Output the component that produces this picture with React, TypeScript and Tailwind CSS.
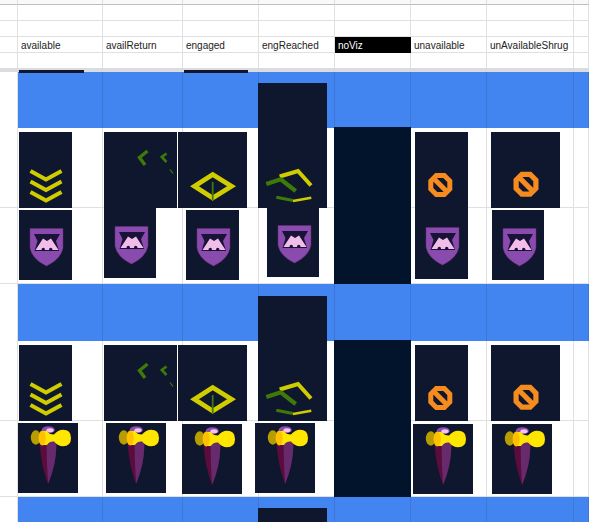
import type { ReactNode } from 'react';

const rows = [
  { h: 'h-[5px]', kind: 'top' },
  { h: 'h-[16px]', kind: 'plain' },
  { h: 'h-[16px]', kind: 'plain' },
  { h: 'h-[16px]', kind: 'label' },
  { h: 'h-[15px]', kind: 'last' },
  { h: 'h-[4px]', kind: 'freeze' },
  { h: 'h-[56px]', kind: 'blue' },
  { h: 'h-[80px]', kind: 'plain' },
  { h: 'h-[76px]', kind: 'plain' },
  { h: 'h-[57px]', kind: 'blue' },
  { h: 'h-[80px]', kind: 'plain' },
  { h: 'h-[76px]', kind: 'plain' },
  { h: 'h-[25px]', kind: 'blue' },
];

const labels = ['', 'available', 'availReturn', 'engaged', 'engReached', 'noViz', 'unavailable', 'unAvailableShrug', ''];
const widths = ['w-[18px]', 'w-[85px]', 'w-[80px]', 'w-[76px]', 'w-[76px]', 'w-[76px]', 'w-[76px]', 'w-[87px]', 'w-[15px]'];

const YEL = '#cfcc00';
const GRN = '#3f7a08';

function Chevrons() {
  return (
    <g fill="none" stroke={YEL} strokeWidth="4">
      <path d="M11.5 39 L27 47.5 L42.5 39" />
      <path d="M11.5 49.5 L27 58 L42.5 49.5" />
      <path d="M11.5 60 L27 68.5 L42.5 60" />
    </g>
  );
}

function ReturnMarks() {
  return (
    <g fill="none" stroke={GRN}>
      <path d="M43.5 19 L35.5 25.5 L41 33" strokeWidth="3.4" />
      <path d="M62.5 21.5 L57.8 25 L62.5 30" strokeWidth="2.6" />
      <path d="M66 37.5 L69 41.5" strokeWidth="1.2" />
    </g>
  );
}

function Diamond() {
  return (
    <g fill="none">
      <path d="M16.5 54.3 L34.7 42.5 L53.5 54.3 L34.7 66Z" stroke={YEL} strokeWidth="4.8" />
      <path d="M34.7 50 V68" stroke={GRN} strokeWidth="1.8" />
    </g>
  );
}

function Reached() {
  return (
    <g fill="none">
      <path d="M21.7 93.5 L40 88 L53 102.5" stroke={YEL} strokeWidth="4" />
      <path d="M8.3 101 L22.7 96.3 L37.7 108" stroke={GRN} strokeWidth="4.2" />
      <path d="M18.3 114.3 L35 117.5" stroke={GRN} strokeWidth="3.2" />
      <path d="M35 118 L53.3 114.7" stroke={YEL} strokeWidth="2.4" />
    </g>
  );
}

function StopSign({ cx, cy, r }: { cx: number; cy: number; r: number }) {
  return (
    <g transform={`translate(${cx} ${cy}) scale(${r / 12})`} fill="none" stroke="#f68b1f">
      <path d="M-4 -9.5 H4 L9.5 -4 V4 L4 9.5 H-4 L-9.5 4 V-4Z" strokeWidth="5" />
      <path d="M-7 -7 L7 7" strokeWidth="5" />
    </g>
  );
}

function Shield({ dy = 0 }: { dy?: number }) {
  return (
    <g transform={`translate(0 ${dy})`}>
      <path d="M11 18.5 H44 V38 Q42 49 27.5 56 Q13 49 11 38Z" fill="#8a4bae" stroke="#6d2a70" strokeWidth="0.5" />
      <path d="M15 24 H41 L37 31 L40 41 H15.5 L18.5 31Z" fill="#1a1338" />
      <path d="M16.5 40 L24 28.5 L28 31 L32 28.5 L39.5 40Z" fill="#f2bde8" />
      <circle cx="24.3" cy="39.5" r="1.7" fill="#1a1338" />
      <circle cx="31.7" cy="39.5" r="1.7" fill="#1a1338" />
    </g>
  );
}

function Horn() {
  return (
    <g>
      <path d="M21.7 22 Q21.5 16 30 16 Q38.5 16 38.3 24 Q38 42 30 61 Q23 42 21.7 22Z" fill="#5b0b3c" />
      <path d="M28.5 16.5 Q38.5 15 38.3 24 Q38 42 30 61 Q28.5 40 28.5 16.5Z" fill="#672a6c" />
      <ellipse cx="30.3" cy="6.8" rx="6.5" ry="3.6" fill="#8a4bae" />
      <ellipse cx="32" cy="7.2" rx="3.6" ry="2" fill="#f2c4ea" />
      <ellipse cx="17.8" cy="14.5" rx="5" ry="7.2" fill="#b89d00" />
      <path d="M25 8 H29 Q31 11.5 36 11.5 Q40 6.8 45 6.8 Q53 6.8 53 15 Q53 23.2 45 23.2 Q40 23.2 36 18.5 Q31 18 29 22 H25Z" fill="#ffe600" />
      <ellipse cx="24.2" cy="15" rx="3.6" ry="7.4" fill="#ffc000" />
    </g>
  );
}

type Sprite = { x: number; y: number; w: number; h: number; bg?: string; art?: ReactNode };

const DARK = '#0f172e';
const sprites: Sprite[] = [
  // stubs under the frozen rows
  { x: 19, y: 70, w: 65, h: 3 },
  { x: 184, y: 70, w: 64, h: 3 },
  // noViz blocks
  { x: 334, y: 127, w: 77, h: 157, bg: '#02142c' },
  { x: 334, y: 340, w: 77, h: 157, bg: '#02142c' },
  // first pair
  { x: 19, y: 132, w: 53, h: 76, art: <Chevrons /> },
  { x: 104, y: 132, w: 73, h: 76, art: <ReturnMarks /> },
  { x: 178, y: 132, w: 69, h: 76, art: <Diamond /> },
  { x: 258, y: 83, w: 69, h: 125, art: <Reached /> },
  { x: 415, y: 132, w: 53, h: 76, art: <StopSign cx={25.3} cy={53} r={12} /> },
  { x: 491, y: 132, w: 69, h: 76, art: <StopSign cx={35} cy={52.3} r={12.5} /> },
  { x: 19, y: 210, w: 53, h: 70, art: <Shield /> },
  { x: 104, y: 208, w: 52, h: 70, art: <Shield dy={0} /> },
  { x: 186, y: 210, w: 53, h: 70, art: <Shield /> },
  { x: 267, y: 208, w: 52, h: 69, art: <Shield dy={-1} /> },
  { x: 415, y: 208, w: 53, h: 71, art: <Shield dy={1} /> },
  { x: 492, y: 210, w: 52, h: 70, art: <Shield /> },
  // second pair
  { x: 19, y: 345, w: 53, h: 76, art: <Chevrons /> },
  { x: 104, y: 345, w: 73, h: 76, art: <ReturnMarks /> },
  { x: 178, y: 345, w: 69, h: 76, art: <Diamond /> },
  { x: 258, y: 296, w: 69, h: 125, art: <Reached /> },
  { x: 415, y: 345, w: 53, h: 76, art: <StopSign cx={25.3} cy={53} r={12} /> },
  { x: 491, y: 345, w: 69, h: 76, art: <StopSign cx={35} cy={52.3} r={12.5} /> },
  { x: 18, y: 423, w: 60, h: 70, art: <Horn /> },
  { x: 106, y: 423, w: 60, h: 70, art: <Horn /> },
  { x: 182, y: 424, w: 60, h: 70, art: <Horn /> },
  { x: 255, y: 423, w: 60, h: 70, art: <Horn /> },
  { x: 413, y: 424, w: 60, h: 70, art: <Horn /> },
  { x: 492, y: 424, w: 60, h: 70, art: <Horn /> },
  // third pair, cut off by the window
  { x: 258, y: 508, w: 69, h: 14 },
];

function Row({ h, kind }: { h: string; kind: string }) {
  if (kind === 'freeze') return <div className={`${h} bg-[#dadce0]`} />;
  return (
    <div className={`flex ${h}`}>
      {widths.map((w, i) => {
        const isBlue = kind === 'blue' && i > 0;
        return (
          <div
            key={i}
            className={`${w} flex items-center overflow-hidden whitespace-nowrap pl-[3px] pt-[2px] text-[10px] leading-none ${
              isBlue ? 'bg-[#4285f0] border-r border-r-[#3f78d4]' : 'border-r border-r-[#e0e0e0]'
            } ${kind === 'top' ? 'bg-[#f8f9fa] border-b border-b-[#bdbdbd] border-r-[#bdbdbd]' : ''} ${
              kind === 'plain' || kind === 'label' ? 'border-b border-b-[#e0e0e0]' : ''
            } ${kind === 'label' && i === 5 ? 'bg-black text-white border-r-black border-b-black' : 'text-[#222]'}`}
          >
            {kind === 'label' ? labels[i] : null}
          </div>
        );
      })}
    </div>
  );
}

export default function App() {
  return (
    <div className="relative h-[522px] w-[589px] overflow-hidden bg-white font-['Liberation_Sans',Arial,sans-serif]">
      {rows.map((r, i) => (
        <Row key={i} h={r.h} kind={r.kind} />
      ))}

      {sprites.map((s, i) => (
        <svg
          key={i}
          className="absolute"
          style={{ left: s.x, top: s.y, width: s.w, height: s.h, background: s.bg ?? DARK }}
          viewBox={`0 0 ${s.w} ${s.h}`}
        >
          {s.art}
        </svg>
      ))}
    </div>
  );
}
